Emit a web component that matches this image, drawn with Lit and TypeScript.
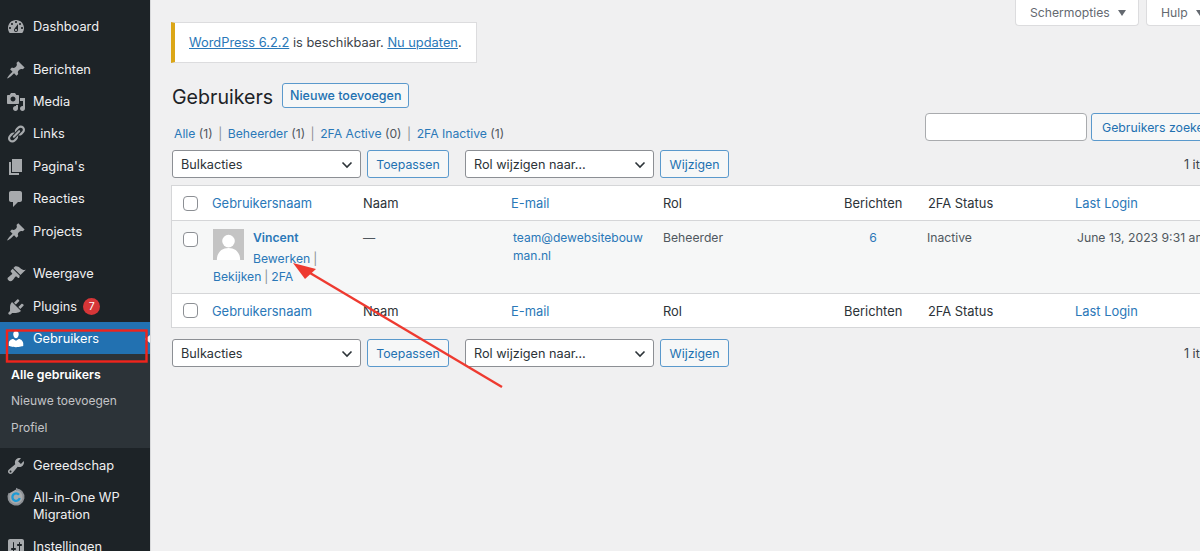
import { LitElement, html, css } from "lit";
import { customElement } from "lit/decorators.js";

const PIN = "M10.44 3.02l1.82-1.82 6.36 6.35-1.83 1.82c-1.05-.68-2.48-.57-3.41.36l-.75.75c-.92.93-1.04 2.35-.35 3.41l-1.83 1.82-2.41-2.41-2.8 2.79c-.42.42-3.38 2.71-3.8 2.29s1.86-3.39 2.28-3.81l2.79-2.79L4.1 9.36l1.83-1.82c1.05.69 2.48.57 3.4-.36l.75-.75c.93-.92 1.05-2.35.36-3.41z";
const ICONS: Record<string, string> = {
  dashboard: "M3.76 16h12.48c1.1-1.37 1.76-3.11 1.76-5 0-4.42-3.58-8-8-8s-8 3.58-8 8c0 1.89.66 3.63 1.76 5zM10 4c.55 0 1 .45 1 1s-.45 1-1 1-1-.45-1-1 .45-1 1-1zM6 6c.55 0 1 .45 1 1s-.45 1-1 1-1-.45-1-1 .45-1 1-1zm8 0c.55 0 1 .45 1 1s-.45 1-1 1-1-.45-1-1 .45-1 1-1zm-5.37 5.55L12 7v6c0 1.1-.9 2-2 2s-2-.9-2-2c0-.57.24-1.08.63-1.45zM4 10c.55 0 1 .45 1 1s-.45 1-1 1-1-.45-1-1 .45-1 1-1zm12 0c.55 0 1 .45 1 1s-.45 1-1 1-1-.45-1-1 .45-1 1-1zm-5 3c0-.55-.45-1-1-1s-1 .45-1 1 .45 1 1 1 1-.45 1-1z",
  pin: PIN,
  media: "M13 11V4c0-.55-.45-1-1-1h-1.67L9 1H5L3.67 3H2c-.55 0-1 .45-1 1v7c0 .55.45 1 1 1h10c.55 0 1-.45 1-1zM7 4.5c1.38 0 2.5 1.12 2.5 2.5S8.38 9.5 7 9.5 4.5 8.38 4.5 7 5.62 4.5 7 4.5zM14 6h5v10.5c0 1.38-1.12 2.5-2.5 2.5S14 17.88 14 16.5s1.12-2.5 2.5-2.5c.17 0 .34.02.5.05V9h-3V6zm-4 8.05V13h2v3.5c0 1.38-1.12 2.5-2.5 2.5S7 17.88 7 16.5 8.12 14 9.5 14c.17 0 .34.02.5.05z",
  links: "M17.74 2.76c1.68 1.69 1.68 4.41 0 6.1l-1.53 1.52c-1.12 1.12-2.7 1.47-4.14 1.09l2.62-2.61.76-.77.76-.76c.84-.84.84-2.2 0-3.04-.84-.85-2.2-.85-3.04 0l-.77.76-3.38 3.38c-.37-1.44-.02-3.02 1.1-4.14l1.52-1.53c1.69-1.68 4.42-1.68 6.1 0zM8.59 13.43l5.34-5.34c.42-.42.42-1.1 0-1.52-.44-.43-1.13-.39-1.53 0l-5.33 5.34c-.42.42-.42 1.1 0 1.52.44.43 1.13.39 1.52 0zm-.76 2.29l4.14-4.15c.38 1.44.03 3.02-1.09 4.14l-1.52 1.53c-1.69 1.68-4.41 1.68-6.1 0-1.68-1.68-1.68-4.42 0-6.1l1.53-1.52c1.12-1.12 2.7-1.47 4.14-1.1l-4.14 4.15c-.85.84-.85 2.2 0 3.05.84.84 2.2.84 3.04 0z",
  page: "M6 15V2h10v13H6zm-1 1h8v2H3V5h2v11z",
  comments: "M5 2h9c1.1 0 2 .9 2 2v7c0 1.1-.9 2-2 2h-2l-5 5v-5H5c-1.1 0-2-.9-2-2V4c0-1.1.9-2 2-2z",
  appearance: "M14.48 11.06L7.41 3.99l1.5-1.5c.5-.56 2.3-.47 3.51.32 1.21.8 1.43 1.28 2.91 2.1 1.18.64 2.45 1.26 4.45.85zm-.71.71L6.7 4.7 4.93 6.47c-.39.39-.39 1.02 0 1.41l1.06 1.06c.39.39.39 1.03 0 1.42-.6.6-1.43 1.11-2.21 1.69-.35.26-.7.53-1.01.84C1.43 13.23 1 14.92 2.4 16.32s3.09.96 4.43-.38c.31-.31.58-.66.84-1.01.58-.78 1.09-1.61 1.69-2.21.39-.39 1.02-.39 1.41 0l1.06 1.06c.39.39 1.03.39 1.42 0z",
  plugins: "M13.11 4.36L9.87 7.6 8 5.73l3.24-3.24c.35-.34 1.05-.2 1.56.32.52.51.66 1.21.31 1.55zm-8 1.77l.91-1.12 9.01 9.01-1.19.84c-.71.71-2.63 1.16-3.82 1.16H6.14L4.9 17.26c-.59.59-1.54.59-2.12 0-.59-.58-.59-1.53 0-2.12l1.24-1.24v-3.88c0-1.13.4-3.19 1.09-3.89zm7.26 3.97l3.24-3.24c.34-.35 1.04-.21 1.55.31.52.51.66 1.21.31 1.55l-3.24 3.25z",
  users: "M10 9.25c-2.27 0-2.73-3.44-2.73-3.44C7 4.02 7.82 2 9.97 2c2.16 0 2.98 2.02 2.71 3.81 0 0-.41 3.44-2.68 3.44zm0 2.57L12.72 10c2.39 0 4.52 2.33 4.52 4.53v2.49s-3.65 1.13-7.24 1.13c-3.65 0-7.24-1.13-7.24-1.13v-2.49c0-2.25 1.94-4.48 4.47-4.48z",
  tools: "M16.68 9.77c-1.34 1.34-3.3 1.67-4.95.99l-5.41 6.52c-.99.99-2.59.99-3.58 0s-.99-2.59 0-3.57l6.52-5.42c-.68-1.65-.35-3.61.99-4.95 1.28-1.28 3.12-1.62 4.72-1.06l-2.89 2.89 2.82 2.82 2.86-2.87c.53 1.58.18 3.39-1.08 4.65zM3.81 16.21c.4.39 1.04.39 1.43 0 .4-.4.4-1.04 0-1.43-.39-.4-1.03-.4-1.43 0-.39.39-.39 1.03 0 1.43z",
  settings: "M18 16V4c0-1.1-.9-2-2-2H4c-1.1 0-2 .9-2 2v12c0 1.1.9 2 2 2h12c1.1 0 2-.9 2-2zM8 11h1c.55 0 1 .45 1 1s-.45 1-1 1H8v1.5c0 .28-.22.5-.5.5s-.5-.22-.5-.5V13H6c-.55 0-1-.45-1-1s.45-1 1-1h1V5.5c0-.28.22-.5.5-.5s.5.22.5.5V11zm5-2h-1c-.55 0-1-.45-1-1s.45-1 1-1h1V5.5c0-.28.22-.5.5-.5s.5.22.5.5V7h1c.55 0 1 .45 1 1s-.45 1-1 1h-1v5.5c0 .28-.22.5-.5.5s-.5-.22-.5-.5V9z",
};

const icon = (n: string) => html`<svg class="ic" viewBox="0 0 20 20"><path d=${ICONS[n]}></path></svg>`;
const migrationIcon = html`<svg class="ic" viewBox="0 0 20 20" fill="none">
  <path d="M10 2.4a7.6 7.6 0 1 1-6.6 3.8" stroke="#8d9196" stroke-width="1.9"></path>
  <path d="M10 .8l2.6 1.7-2.6 1.7z" fill="#8d9196"></path>
  <path d="M13 7.8A3.7 3.7 0 1 0 13.7 11" stroke="#1c9ad6" stroke-width="2.3"></path>
</svg>`;
const chevron = html`<svg class="chev" viewBox="0 0 12 8" fill="none"><path d="M1.5 1.5 6 6l4.5-4.5" stroke="#2c3338" stroke-width="1.6"></path></svg>`;

@customElement("app-root")
export class AppRoot extends LitElement {
  static styles = css`
    :host { display: flex; width: 1200px; height: 551px; overflow: hidden; position: relative; background: #f0f0f1; font-family: Inter, "Liberation Sans", sans-serif; font-size: 12.5px; line-height: 18px; color: #3c434a; }
    * { box-sizing: border-box; }
    a { color: #2a78b8; text-decoration: none; }
    .side { flex: 0 0 151px; width: 151px; height: 551px; overflow: hidden; background: #1d2327; color: #f0f0f1; padding-top: 10.6px; border-right: 1px solid #d8d9db; font-size: 12.8px; }
    .item { display: flex; align-items: center; height: 32.4px; padding-left: 6px; gap: 7px; position: relative; }
    .item.tall { height: 49px; align-items: flex-start; padding-top: 7px; line-height: 17px; }
    .item.tall .ic { margin-top: -2px; }
    .gap { height: 10.4px; }
    .ic { width: 20px; height: 20px; flex: none; fill: #a7aaad; }
    .item.cur { background: #2271b1; color: #fff; margin-top: -1px; height: 32px; padding-top: 2px; }
    .item.cur .ic { fill: #fff; }
    .notch { position: absolute; right: 0; top: 13px; border: 4px solid transparent; border-right: 5px solid #f0f0f1; border-left: 0; }
    .badge { width: 17px; height: 17px; border-radius: 50%; background: #d63638; color: #fff; font-size: 10.5px; line-height: 17px; text-align: center; margin-left: -1px; }
    .sub { background: #2c3338; padding: 8px 0 0; height: 94px; margin-bottom: 2px; font-size: 12px; }
    .sub div { height: 26.5px; line-height: 26px; padding-left: 11px; color: #c3c4c7; }
    .sub div.on { color: #fff; font-weight: 600; font-size: 12.3px; }
    .main { flex: 1; min-width: 0; padding-left: 20px; }
    .wrap { width: 1051px; }
    .tabs { display: flex; gap: 7px; height: 22px; margin-left: 844px; }
    .tab { background: #fff; border: 1px solid #dcdcde; border-top: 0; border-radius: 0 0 4px 4px; height: 26px; display: flex; align-items: center; padding: 0 14px; gap: 8px; color: #646970; font-size: 12.2px; }
    .tab i { border: 4.5px solid transparent; border-top: 6px solid #646970; border-bottom: 0; }
    .tab.one { width: 124px; }
    .tab.two { width: 100px; }
    .notice { width: 306px; height: 41px; background: #fff; border: 1px solid #dcdcde; border-left: 4px solid #dba617; display: flex; align-items: center; padding-left: 14px; font-size: 12.85px; white-space: pre; }
    .notice a { text-decoration: underline; }
    .title { display: flex; align-items: center; gap: 9px; margin: 20px 0 0 1px; height: 24px; }
    h1 { margin: 0; padding-top: 3px; font-size: 19.6px; font-weight: 400; color: #1d2327; line-height: 26px; }
    .btn { display: inline-flex; align-items: center; justify-content: center; height: 28px; padding-top: 1px; background: #f6f7f7; border: 1px solid #5a99cc; border-radius: 3px; color: #2271b1; white-space: nowrap; font-size: 12.3px; }
    .add { width: 127px; height: 25px; font-weight: 500; padding-top: 2px; font-size: 12.5px; }
    .filter { display: flex; justify-content: space-between; align-items: flex-end; margin-top: 6px; height: 28px; padding-left: 3px; }
    .links { line-height: 16px; padding-top: 1px; position: relative; top: 1px; color: #50575e; white-space: pre; font-size: 12.2px; }
    .links span { color: #8c8f94; padding: 0 5.5px; }
    .search { display: flex; gap: 4px; }
    .input { width: 162px; height: 28px; background: #fff; border: 1px solid #a9abae; border-radius: 4px; }
    .search .btn { width: 131px; }
    .nav { display: flex; align-items: center; height: 28px; margin: 9px 0 7px 1px; }
    .nav.low { margin-top: 11px; }
    .select { display: flex; align-items: center; justify-content: space-between; width: 189px; height: 28px; background: #fff; border: 1px solid #8c8f94; border-radius: 3px; padding: 1px 7px 0 8px; color: #2c3338; font-size: 12.7px; }
    .chev { width: 12px; height: 8px; }
    .nav .btn { margin-left: 6px; }
    .apply { width: 82px; }
    .change { width: 69px; }
    .nav .select.second { margin-left: 16px; }
    .count { margin-left: auto; padding-top: 1px; width: 38px; white-space: nowrap; }
    table { width: 1051px; border-collapse: separate; border-spacing: 0; table-layout: fixed; background: #fff; border: 1px solid #d5d6d8; }
    .c0 { width: 32px; } .c1 { width: 151px; } .c2 { width: 148px; } .c3 { width: 152px; } .c4 { width: 181px; } .c5 { width: 84px; } .c6 { width: 147px; } .c7 { width: 154px; }
    th { font-weight: 400; text-align: left; padding: 2px 8px 0; color: #2c3338; font-size: 12.9px; }
    thead th { border-bottom: 1px solid #d5d6d8; height: 35px; }
    tfoot th { border-top: 1px solid #d5d6d8; height: 34px; }
    td { vertical-align: top; padding: 8px; background: #f6f7f7; height: 72px; color: #50575e; font-size: 12.2px; }
    .box { display: block; width: 15px; height: 15px; background: #fff; border: 1px solid #8c8f94; border-radius: 4px; margin-left: 3px; }
    th:first-child, td:first-child { padding: 0 0 0 8px; }
    td:first-child .box { margin-top: 11px; }
    td.user { padding: 8px 8px 0 9px; }
    .avatar { float: left; width: 31px; height: 31px; margin: 0 9px 0 0; background: #c4c4c4; overflow: hidden; }
    .avatar svg { display: block; width: 31px; height: 31px; }
    .name { display: block; font-weight: 600; height: 21px; }
    .actions { color: #8c8f94; word-spacing: -0.5px; }
    td.mail { padding: 8px 4px 0 10px; word-break: break-all; font-size: 12.05px; }
    td.num { text-align: center; padding-left: 0; padding-right: 10px; }
    td.date { padding-left: 10px; white-space: nowrap; }
    td.pad7 { padding-left: 7px; }
    .note { position: absolute; left: 0; top: 0; width: 1200px; height: 551px; pointer-events: none; }
  `;

  private menu(n: string, label: string) {
    return html`<div class="item">${icon(n)}<span>${label}</span></div>`;
  }

  private head() {
    return html`<tr>
      <th><span class="box"></span></th>
      <th><a>Gebruikersnaam</a></th><th>Naam</th><th><a>E-mail</a></th><th>Rol</th>
      <th>Berichten</th><th>2FA Status</th><th><a>Last Login</a></th>
    </tr>`;
  }

  private nav(low = false) {
    return html`<div class="nav ${low ? "low" : ""}">
      <div class="select"><span>Bulkacties</span>${chevron}</div>
      <a class="btn apply">Toepassen</a>
      <div class="select second"><span>Rol wijzigen naar…</span>${chevron}</div>
      <a class="btn change">Wijzigen</a>
      <span class="count">1 item</span>
    </div>`;
  }

  render() {
    return html`
      <nav class="side">
        <div class="item">${icon("dashboard")}<span>Dashboard</span></div>
        <div class="gap"></div>
        ${this.menu("pin", "Berichten")}
        ${this.menu("media", "Media")}
        ${this.menu("links", "Links")}
        ${this.menu("page", "Pagina's")}
        ${this.menu("comments", "Reacties")}
        ${this.menu("pin", "Projects")}
        <div class="gap"></div>
        ${this.menu("appearance", "Weergave")}
        <div class="item">${icon("plugins")}<span>Plugins</span><span class="badge">7</span></div>
        <div class="item cur">${icon("users")}<span>Gebruikers</span><i class="notch"></i></div>
        <div class="sub">
          <div class="on">Alle gebruikers</div>
          <div>Nieuwe toevoegen</div>
          <div>Profiel</div>
        </div>
        ${this.menu("tools", "Gereedschap")}
        <div class="item tall">${migrationIcon}<span>All-in-One WP<br />Migration</span></div>
        ${this.menu("settings", "Instellingen")}
      </nav>
      <main class="main">
        <div class="wrap">
          <div class="tabs">
            <div class="tab one">Schermopties <i></i></div>
            <div class="tab two">Hulp <i></i></div>
          </div>
          <div class="notice"><a>WordPress 6.2.2</a> is beschikbaar. <a>Nu updaten</a>.</div>
          <div class="title"><h1>Gebruikers</h1><a class="btn add">Nieuwe toevoegen</a></div>
          <div class="filter">
            <div class="links"><a>Alle</a> (1)<span>|</span><a>Beheerder</a> (1)<span>|</span><a>2FA Active</a> (0)<span>|</span><a>2FA Inactive</a> (1)</div>
            <div class="search"><div class="input"></div><a class="btn">Gebruikers zoeken</a></div>
          </div>
          ${this.nav()}
          <table>
            <colgroup>
              <col class="c0" /><col class="c1" /><col class="c2" /><col class="c3" /><col class="c4" /><col class="c5" /><col class="c6" /><col class="c7" />
            </colgroup>
            <thead>${this.head()}</thead>
            <tbody>
              <tr>
                <td><span class="box"></span></td>
                <td class="user">
                  <div class="avatar"><svg viewBox="0 0 32 32"><circle cx="16" cy="12.5" r="6.5" fill="#fff"></circle><path d="M4 32c0-8 5-12.5 12-12.5S28 24 28 32z" fill="#fff"></path></svg></div>
                  <a class="name">Vincent</a>
                  <span class="actions"><a>Bewerken</a> | <a>Bekijken</a> | <a>2FA</a></span>
                </td>
                <td>—</td>
                <td class="mail"><a>team@dewebsitebouwman.nl</a></td>
                <td>Beheerder</td>
                <td class="num"><a>6</a></td>
                <td class="pad7">Inactive</td>
                <td class="date">June 13, 2023 9:31 am</td>
              </tr>
            </tbody>
            <tfoot>${this.head()}</tfoot>
          </table>
          ${this.nav(true)}
        </div>
      </main>
      <svg class="note" viewBox="0 0 1200 551" fill="none">
        <rect x="7" y="330.5" width="139.5" height="31" stroke="#f0241c" stroke-width="2.4"></rect>
        <path d="M502 387 305 270" stroke="#ee3a30" stroke-width="2.4"></path>
        <path d="M293 263 316 269 305 279z" fill="#ee3a30"></path>
      </svg>
    `;
  }
}
